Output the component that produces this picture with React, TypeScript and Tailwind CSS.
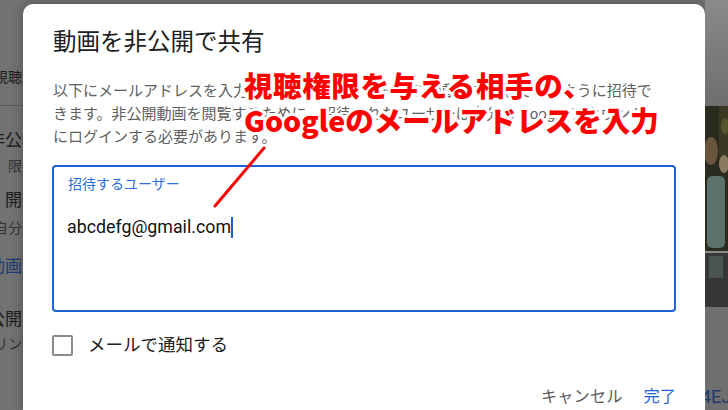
import React from "react";

// 背景のページ(左端)
function LeftStrip() {
  return (
    <div className="w-[23px] shrink-0 h-full overflow-hidden flex flex-col text-[#1c1c1c]">
      <div className="h-[105px] flex flex-col justify-end pb-[18px]">
        <div className="flex justify-end pr-[1px] whitespace-nowrap text-[14px] leading-[20px]">視聴</div>
      </div>
      <div className="h-px bg-[#5a5a5a]" />
      <div className="flex justify-end pr-[1px] whitespace-nowrap text-[17px] leading-[24px] mt-[22px]">非公</div>
      <div className="flex justify-end pr-[1px] whitespace-nowrap text-[14px] leading-[20px] mt-[4px] text-[#333]">限</div>
      <div className="flex justify-end pr-[1px] whitespace-nowrap text-[17px] leading-[24px] mt-[12px]">開</div>
      <div className="flex justify-end pr-[1px] whitespace-nowrap text-[14px] leading-[20px] mt-[6px] text-[#333]">自分</div>
      <div className="flex justify-end pr-[1px] whitespace-nowrap text-[17px] leading-[24px] mt-[16px] text-[#1d3c74]">動画</div>
      <div className="flex justify-end pr-[1px] whitespace-nowrap text-[17px] leading-[24px] mt-[29px]">公開</div>
      <div className="flex justify-end pr-[1px] whitespace-nowrap text-[14px] leading-[20px] mt-[3px] text-[#333]">リン</div>
    </div>
  );
}

// 背景のページ(右端)
function RightStrip() {
  return (
    <div className="flex-1 h-full overflow-hidden flex flex-col">
      <div className="h-[106px] bg-gradient-to-b from-[#8a8a8a] to-[#6e6e6e]" />
      <svg width="23" height="201" viewBox="0 0 23 201" className="block">
        <rect width="23" height="201" fill="#2a2a1f" />
        <rect x="14" y="0" width="9" height="60" fill="#3a3a24" />
        <ellipse cx="20" cy="20" rx="4" ry="8" fill="#55552e" />
        <ellipse cx="6" cy="45" rx="7" ry="14" fill="#6a5540" />
        <rect x="2" y="70" width="18" height="72" rx="5" fill="#5b716c" />
        <ellipse cx="19" cy="58" rx="5" ry="9" fill="#8b7a60" />
        <rect x="0" y="145" width="23" height="2" fill="#8d8d8d" />
        <rect x="0" y="147" width="23" height="54" fill="#363636" />
        <rect x="4" y="150" width="14" height="22" fill="#4a5452" />
      </svg>
      <div className="flex-1 bg-[#6f6f6f] flex flex-col justify-end pb-[1px]">
        <div className="flex justify-start -ml-[4px] whitespace-nowrap text-[18px] leading-[24px] text-[#1d3a6d] font-[Roboto,sans-serif]">4EJ</div>
      </div>
    </div>
  );
}

export default function App() {
  return (
    <div className="relative w-[728px] h-[410px] overflow-hidden flex bg-[#727272] font-[Roboto,'Noto_Sans_CJK_JP',sans-serif]">
      <LeftStrip />

      <div className="w-[682px] shrink-0 mt-[4px] bg-white rounded-t-[10px] px-[29px] pt-[22px] flex flex-col shadow-[0_0_12px_rgba(0,0,0,0.3)]">
        <h2 className="text-[23.5px] leading-[32px] text-[#202020] pl-px">動画を非公開で共有</h2>

        <div className="mt-[22px] text-[15px] leading-[23px] text-[#606060] pl-px whitespace-nowrap">
          <div>以下にメールアドレスを入力すると、そのユーザーがこの動画を視聴できるように招待で</div>
          <div>きます。非公開動画を閲覧するために、招待されたユーザーは自分の Google アカウント</div>
          <div>にログインする必要があります。</div>
        </div>

        <div className="mt-[16px] h-[147px] border-2 border-[#1a63d6] rounded-[4px] pl-[14px] pt-[7px]">
          <div className="text-[14px] leading-[20px] text-[#2c6fd8]">招待するユーザー</div>
          <div className="mt-[21px] flex items-center text-[17.8px] leading-[24px] text-[#111]">
            <span className="-ml-px">abcdefg@gmail.com</span>
            <span className="inline-block w-[2px] h-[21px] bg-[#1a5fd4]" />
          </div>
        </div>

        <div className="mt-[21px] flex items-center">
          <div className="w-[21px] h-[21px] border-2 border-[#8a8a8a] rounded-[2px]" />
          <span className="ml-[15px] text-[17.5px] leading-[24px] text-[#202020]">メールで通知する</span>
        </div>

        <div className="mt-[29px] flex justify-end items-center gap-[21px] text-[16.3px] leading-[22px]">
          <span className="text-[#606060]">キャンセル</span>
          <span className="text-[#1f66d4]">完了</span>
        </div>
      </div>

      <RightStrip />

      {/* 注釈 */}
      <div className="absolute left-[244px] top-[67px] font-['Noto_Sans_CJK_JP',sans-serif] font-black text-[28.5px] leading-[35px] text-[#ff0000] whitespace-nowrap [-webkit-text-stroke:6px_white] [paint-order:stroke_fill]">
        <div className="tracking-[0.6px]">視聴権限を与える相手の、</div>
        <div>Googleのメールアドレスを入力</div>
      </div>
      <svg className="absolute left-0 top-0" width="728" height="410">
        <line x1="264" y1="148" x2="215" y2="206" stroke="#ff0000" strokeWidth="3" strokeLinecap="round" />
      </svg>
    </div>
  );
}
